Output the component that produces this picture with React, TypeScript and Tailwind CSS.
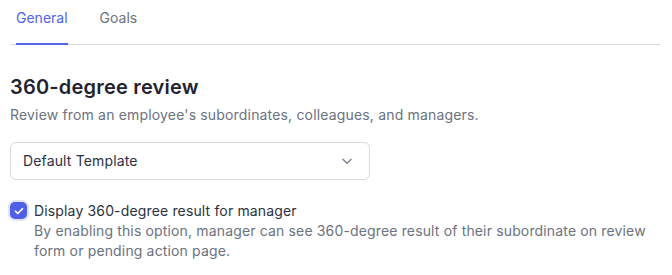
const tabs = ["General", "Goals"]

const App = () => {
    return (
        <div className="w-[672px] h-[275px] bg-white font-['Inter',sans-serif] text-sm overflow-hidden">
            {/* Tabs */}
            <div className="ml-[10px] w-[650px] flex gap-8 border-b border-[#d4d8e0] px-[6px]">
                {tabs.map((tab, index) => (
                    <button
                        key={tab}
                        className={`h-[45px] -mb-px border-b-2 pb-[8px] ${index === 0 ? "border-[#4f63e8] text-[#4f63e8]" : "border-transparent text-[#6b7280]"}`}
                    >
                        {tab}
                    </button>
                ))}
            </div>

            <main className="px-[10px]">
                <h2 className="mt-[28px] text-[20px] tracking-[0.2px] leading-7 font-semibold text-[#1f2430]">360-degree review</h2>
                <p className="mt-[4px] text-[#6b7280] tracking-[0.17px] leading-5">Review from an employee's subordinates, colleagues, and managers.</p>

                {/* Template select */}
                <div className="mt-[17px] w-[360px] h-[38px] flex items-center justify-between px-3 border border-[#d4d8e0] rounded-md text-[#2b3140] tracking-[0.15px]">
                    <span>Default Template</span>
                    <svg width="14" height="14" viewBox="0 0 24 24" fill="none" stroke="#6b7280" strokeWidth="2" strokeLinecap="round" strokeLinejoin="round" className="mr-[3px]">
                        <path d="m5 9 7 7 7-7" />
                    </svg>
                </div>

                {/* Checkbox option */}
                <div className="mt-[21px] flex gap-[7px]">
                    <div className="mt-[1px] w-[17px] h-[17px] shrink-0 rounded-[5px] bg-[#4f5fe6] ring-[2px] ring-[#dfe4fb] flex items-center justify-center">
                        <svg width="12" height="12" viewBox="0 0 24 24" fill="none" stroke="white" strokeWidth="3.5" strokeLinecap="round" strokeLinejoin="round">
                            <path d="M5 12.5l4.5 4.5L19 7.5" />
                        </svg>
                    </div>
                    <div className="leading-5 tracking-[0.15px]">
                        <p className="text-[#2b3140]">Display 360-degree result for manager</p>
                        <p className="text-[#6b7280]">By enabling this option, manager can see 360-degree result of their subordinate on review form or pending action page.</p>
                    </div>
                </div>
            </main>
        </div>
    )
}

export default App
